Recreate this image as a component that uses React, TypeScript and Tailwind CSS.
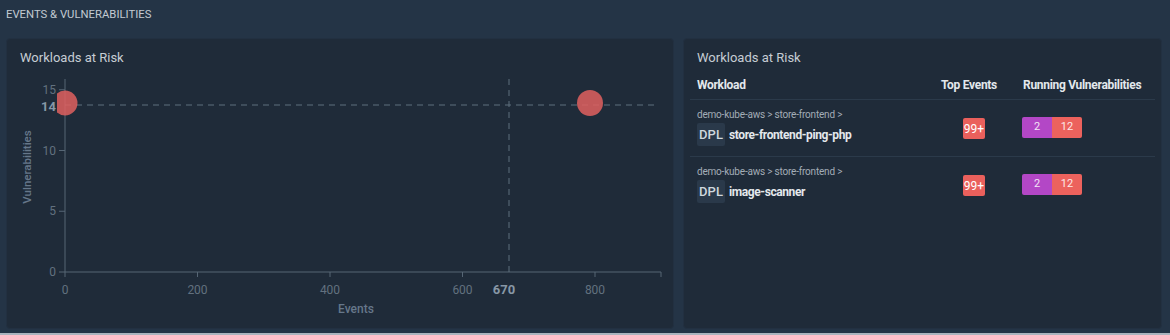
import React from "react";

type Workload = {
  path: string;
  kind: string;
  name: string;
  events: string;
  vulns: [number, number];
};

const workloads: Workload[] = [
  {
    path: "demo-kube-aws > store-frontend >",
    kind: "DPL",
    name: "store-frontend-ping-php",
    events: "99+",
    vulns: [2, 12],
  },
  {
    path: "demo-kube-aws > store-frontend >",
    kind: "DPL",
    name: "image-scanner",
    events: "99+",
    vulns: [2, 12],
  },
];

// chart scale (page coords, the svg group is shifted back by the card offset)
const x0 = 64;
const xPer = 0.6625;
const y0 = 271;
const yPer = 12.15;
const px = (v: number) => x0 + v * xPer;
const py = (v: number) => y0 - v * yPer;

function RiskChart() {
  const tickColor = "#62717f";
  const axisColor = "#566675";
  return (
    <svg width="668" height="263" className="block">
      <defs>
        <clipPath id="plotClip">
          <rect x="56" y="70" width="620" height="210" />
        </clipPath>
      </defs>
      <g transform="translate(-6,-66)" fontFamily="Roboto, 'Liberation Sans', sans-serif">
        {/* y axis label */}
        <text
          x="0"
          y="0"
          transform="translate(30,166) rotate(-90)"
          textAnchor="middle"
          fontSize="11.5"
          fontWeight="500"
          fill="#66778a"
        >
          Vulnerabilities
        </text>

        {/* y ticks */}
        {[0, 5, 10, 15].map((v) => (
          <g key={v}>
            <line x1="58" x2={x0} y1={py(v)} y2={py(v)} stroke={axisColor} />
            <text x="55" y={py(v) + 4} textAnchor="end" fontSize="12" fill={tickColor}>
              {v}
            </text>
          </g>
        ))}
        <text x="55" y="110" textAnchor="end" fontSize="13" fontWeight="700" fill="#8797a6">
          14
        </text>

        {/* x ticks */}
        {[0, 200, 400, 600, 800].map((v) => (
          <g key={v}>
            <line x1={px(v)} x2={px(v)} y1={y0} y2={y0 + 5} stroke={axisColor} />
            <text x={px(v)} y="293" textAnchor="middle" fontSize="12" fill={tickColor}>
              {v}
            </text>
          </g>
        ))}
        <line x1="660" x2="660" y1={y0} y2={y0 + 5} stroke={axisColor} />
        <text x="503" y="293" textAnchor="middle" fontSize="13" fontWeight="700" fill="#8797a6">
          670
        </text>
        <text x="355" y="312" textAnchor="middle" fontSize="12" fontWeight="500" fill="#66778a">
          Events
        </text>

        {/* axes */}
        <line x1={x0} x2={x0} y1="78" y2={y0} stroke={axisColor} />
        <line x1={x0} x2="660" y1={y0} y2={y0} stroke={axisColor} />

        {/* reference lines */}
        <line x1={x0} x2="657" y1="104" y2="104" stroke="#5f707e" strokeDasharray="6 5" />
        <line x1="508" x2="508" y1="78" y2={y0} stroke="#5f707e" strokeDasharray="6 5" />

        {/* points */}
        <g clipPath="url(#plotClip)">
          <circle cx={x0} cy="102" r="12.5" fill="#e0605f" fillOpacity="0.85" />
          <circle cx="589" cy="102" r="13" fill="#e0605f" fillOpacity="0.85" />
        </g>
      </g>
    </svg>
  );
}

function WorkloadRow({ w, last }: { w: Workload; last: boolean }) {
  return (
    <div
      className={
        "flex items-center px-[7px] pt-[9px] pb-[10px] " +
        (last ? "" : "border-b border-[#2b3a4a]")
      }
    >
      <div className="flex-1">
        <div className="text-[10px] leading-[12px] tracking-[-0.2px] text-[#a3adb7] whitespace-nowrap">
          {w.path}
        </div>
        <div className="flex items-center mt-[2px] gap-[4px]">
          <span className="h-[23px] w-[28px] flex items-center justify-center rounded-[2px] bg-[#2a394a] text-[13px] font-medium text-[#cfd7de]">
            {w.kind}
          </span>
          <span className="text-[12px] font-bold tracking-[-0.4px] text-[#e4e8ec] whitespace-nowrap">
            {w.name}
          </span>
        </div>
      </div>
      <div className="w-[83px]">
        <span className="ml-[24px] inline-flex h-[21px] w-[22px] items-center justify-center rounded-[2px] bg-[#ea605c] text-[12px] text-white">
          {w.events}
        </span>
      </div>
      <div className="w-[126px] flex">
        <span className="h-[21px] w-[30px] flex items-center justify-center rounded-l-[2px] bg-[#b347c6] text-[11px] text-[#f3e4f6]">
          {w.vulns[0]}
        </span>
        <span className="h-[21px] w-[30px] flex items-center justify-center rounded-r-[2px] bg-[#ec625d] text-[11px] text-[#fde9e8]">
          {w.vulns[1]}
        </span>
      </div>
    </div>
  );
}

export default function App() {
  return (
    <div
      className="w-[1170px] h-[335px] bg-[#243446] flex flex-col overflow-hidden"
      style={{ fontFamily: "Roboto, 'Liberation Sans', sans-serif" }}
    >
      {/* Section header */}
      <div className="h-[38px] px-[6px] pt-[8px] text-[11.3px] leading-[14px] text-[#c2cad2] uppercase">
        Events &amp; Vulnerabilities
      </div>

      {/* Cards */}
      <div className="flex gap-[9px] pl-[6px] pr-[8px] h-[291px]">
        <div className="w-[668px] rounded-[4px] bg-[#1f2b39] border border-[#223041]">
          <div className="px-[13px] pt-[10px] text-[13px] leading-[18px] text-[#c6cdd4]">
            Workloads at Risk
          </div>
          <RiskChart />
        </div>

        <div className="flex-1 rounded-[4px] bg-[#1f2b39] border border-[#223041]">
          <div className="px-[13px] pt-[10px] text-[13px] leading-[18px] text-[#c6cdd4]">
            Workloads at Risk
          </div>
          <div className="mx-[6px] mt-[10px]">
            <div className="flex px-[7px] pb-[6px] text-[12px] leading-[16px] font-bold tracking-[-0.3px] text-[#e3e8ec] border-b border-[#2b3a4a] whitespace-nowrap">
              <div className="flex-1">Workload</div>
              <div className="w-[83px] pl-[2px]">Top Events</div>
              <div className="w-[126px] pl-[1px]">Running Vulnerabilities</div>
            </div>
            {workloads.map((w, i) => (
              <WorkloadRow key={w.name} w={w} last={i === workloads.length - 1} />
            ))}
          </div>
        </div>
      </div>

      <div className="flex-1" />
      <div className="h-[2px] bg-[#aab4be]" />
    </div>
  );
}
